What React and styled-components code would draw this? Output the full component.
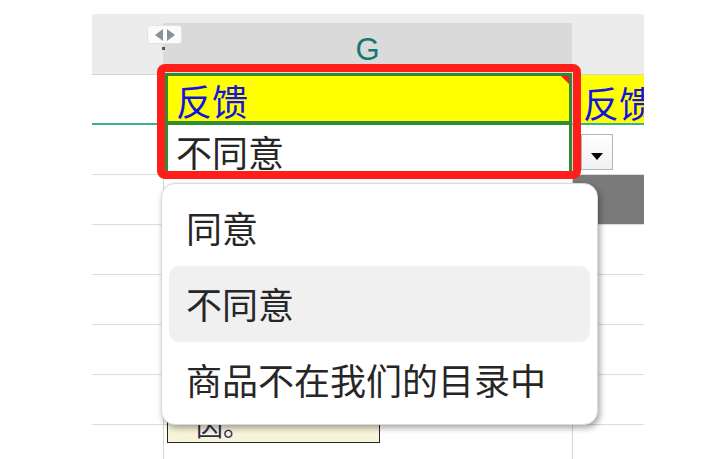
import React from "react"
import styled, { createGlobalStyle } from "styled-components"

const GlobalStyle = createGlobalStyle`
	body {
		margin: 0;
		background: #fff;
		font-family: "Noto Sans CJK SC", "Noto Sans", sans-serif;
	}
`

const options = ["同意", "不同意", "商品不在我们的目录中"]
const blankRows = [3, 4, 5, 6, 7, 8]

const App = () => (
	<>
		<GlobalStyle />
		<Page>
			<Sheet>
				<Corner />
				<ColHeader>G</ColHeader>
				<SideHeader />

				<RowCell accent />
				<Cell selected fill="#ffff00" color="#1414e0" edge="top">
					反馈
					<CommentMark />
				</Cell>
				<Cell fill="#ffff00" color="#1414e0" accent clip>反馈</Cell>

				<RowCell />
				<Cell selected edge="bottom" color="#262626">不同意</Cell>
				<Cell>
					<DropButton><Arrow /></DropButton>
				</Cell>

				{blankRows.map(row => (
					<React.Fragment key={row}>
						<RowCell />
						<Cell />
						<Cell fill={row == 3 ? "#7a7a7a" : "#fff"} />
					</React.Fragment>
				))}
			</Sheet>

			<ResizeHandle>
				<HandleArrow dir="left" />
				<HandleArrow dir="right" />
			</ResizeHandle>
			<Tick />

			<Highlight />

			<Comment>因。</Comment>

			<Menu>
				{options.map(opt => (
					<MenuItem key={opt} active={opt == "不同意"}>{opt}</MenuItem>
				))}
			</Menu>
		</Page>
	</>
)

const Page = styled.div`
	position: relative;
	width: 712px;
	height: 459px;
	overflow: hidden;
`

const Sheet = styled.div`
	display: grid;
	grid-template-columns: 71px 409px 72px;
	grid-template-rows: 61px repeat(8, 50px);
	margin: 14px 0 0 92px;
	width: 552px;
	height: 445px;
	overflow: hidden;
	background: #fff;
`

const Corner = styled.div`
	background: #ececec;
	border-bottom: 1px solid #d2d2d2;
`

const SideHeader = styled(Corner)``

const ColHeader = styled.div`
	display: flex;
	align-items: center;
	justify-content: center;
	background: #dadada;
	border-top: 9px solid #ececec;
	border-bottom: 1px solid #d2d2d2;
	color: #137a70;
	font-family: "Liberation Sans", "Open Sans", sans-serif;
	font-size: 31px;
	padding-top: 2px;
`

const RowCell = styled.div`
	background: #fff;
	border-bottom: ${p => p.accent ? "2px solid #35b48f" : "1px solid #dcdcdc"};
`

const Cell = styled.div`
	position: relative;
	display: flex;
	align-items: flex-end;
	box-sizing: border-box;
	background: ${p => p.fill || "#fff"};
	color: ${p => p.color || "#222"};
	font-size: 36px;
	line-height: 1.15;
	padding: 0 0 0 8px;
	white-space: nowrap;
	border-left: 1px solid #d6d6d6;
	border-bottom: ${p => p.accent ? "2px solid #35b48f" : "1px solid #dcdcdc"};
	${p => p.selected && `
		margin-left: 2px;
		border-left: 3px solid #2f8a34;
		border-right: 3px solid #2f8a34;
	`}
	${p => p.edge == "top" && `
		border-top: 3px solid #2f8a34;
		border-bottom: 4px solid #2f8a34;
		margin-top: -2px;
	`}
	${p => p.edge == "bottom" && `
		border-bottom: 3px solid #2f8a34;
	`}
	${p => p.clip && `
		padding-left: 10px;
		overflow: hidden;
	`}
`

const CommentMark = styled.span`
	position: absolute;
	top: 0;
	right: 0;
	border-top: 8px solid #ff1a1a;
	border-left: 8px solid transparent;
`

const DropButton = styled.div`
	display: flex;
	align-items: center;
	justify-content: center;
	align-self: flex-start;
	box-sizing: border-box;
	width: 32px;
	height: 36px;
	margin: 9px 0 0 0;
	padding-top: 8px;
	border: 1px solid #a9b8cb;
	background: linear-gradient(#ffffff, #f1f1f1);
`

const Arrow = styled.span`
	border-left: 6px solid transparent;
	border-right: 6px solid transparent;
	border-top: 7px solid #000;
`

const ResizeHandle = styled.div`
	position: absolute;
	left: 147px;
	top: 25px;
	width: 35px;
	height: 19px;
	display: flex;
	align-items: center;
	justify-content: center;
	gap: 4px;
	background: #fbfbfb;
	border: 1px solid #e2e2e2;
	border-radius: 3px;
	box-sizing: border-box;
`

const HandleArrow = styled.span`
	border-top: 6px solid transparent;
	border-bottom: 6px solid transparent;
	${p => p.dir == "left"
		? "border-right: 8px solid #8a909b;"
		: "border-left: 8px solid #8a909b;"}
`

const Tick = styled.span`
	position: absolute;
	left: 162px;
	top: 47px;
	width: 3px;
	height: 3px;
	background: #555;
`

const Highlight = styled.div`
	position: absolute;
	left: 157px;
	top: 64px;
	width: 424px;
	height: 115px;
	box-sizing: border-box;
	border: 8px solid #ff1e1a;
	border-radius: 8px;
`

const Comment = styled.div`
	position: absolute;
	left: 167px;
	top: 385px;
	width: 213px;
	height: 58px;
	box-sizing: border-box;
	display: flex;
	align-items: flex-end;
	padding: 0 0 4px 28px;
	background: #f7f4d9;
	border: 1.5px solid #262626;
	color: #2b2b55;
	font-size: 27px;
	line-height: 1;
`

const Menu = styled.div`
	position: absolute;
	left: 161px;
	top: 183px;
	width: 437px;
	height: 242px;
	box-sizing: border-box;
	display: flex;
	flex-direction: column;
	padding: 6px 7px;
	background: #fff;
	border: 1px solid #d9d9d9;
	border-radius: 14px;
	box-shadow: 2px 3px 6px rgba(0, 0, 0, 0.35);
`

const MenuItem = styled.div`
	display: flex;
	align-items: center;
	height: 77px;
	padding-left: 17px;
	padding-bottom: 3px;
	box-sizing: border-box;
	border-radius: 11px;
	background: ${p => p.active ? "#f0f0f0" : "transparent"};
	color: #262626;
	font-size: 36px;
	line-height: 1;
`

export default App
